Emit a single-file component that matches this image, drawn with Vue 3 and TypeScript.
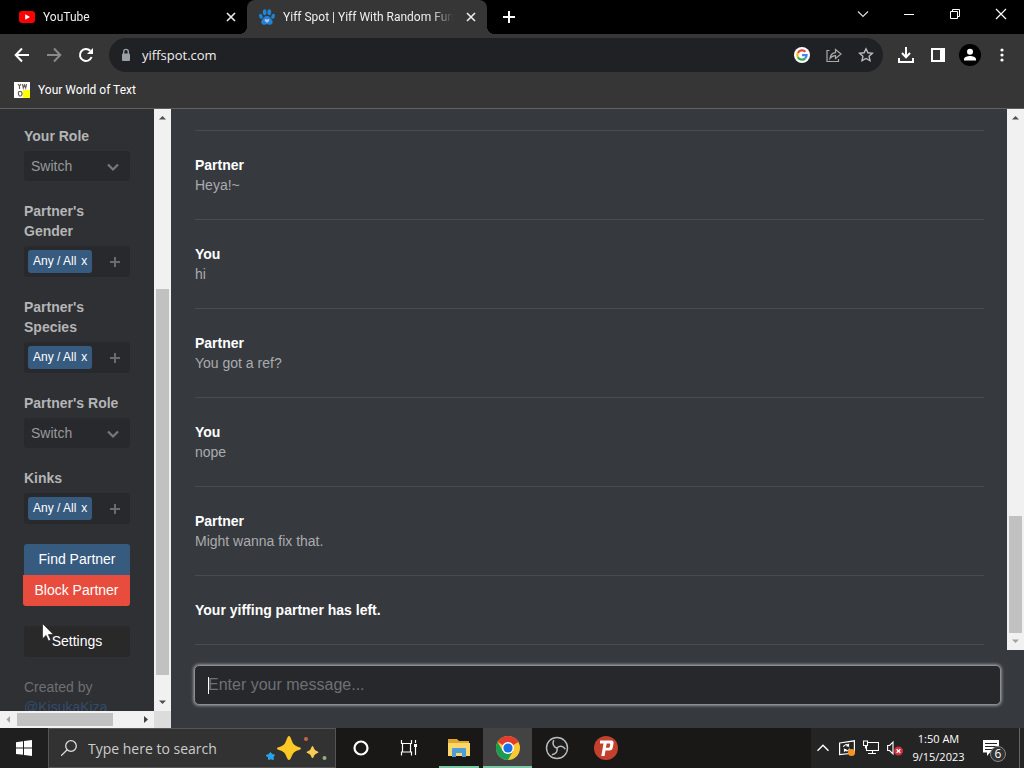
<script setup lang="ts">
import { ref } from 'vue'

interface Message {
  author: string
  text?: string
}

interface Field {
  id: string
  label: string
  kind: 'select' | 'tags'
}

const fields: Field[] = [
  { id: 'your-role', label: 'Your Role', kind: 'select' },
  { id: 'partner-gender', label: "Partner's Gender", kind: 'tags' },
  { id: 'partner-species', label: "Partner's Species", kind: 'tags' },
  { id: 'partner-role', label: "Partner's Role", kind: 'select' },
  { id: 'kinks', label: 'Kinks', kind: 'tags' },
]

const messages: Message[] = [
  { author: 'Partner', text: 'Heya!~' },
  { author: 'You', text: 'hi' },
  { author: 'Partner', text: 'You got a ref?' },
  { author: 'You', text: 'nope' },
  { author: 'Partner', text: 'Might wanna fix that.' },
  { author: 'Your yiffing partner has left.' },
]

const draft = ref('')
</script>

<template>
  <div class="desktop">
    <header class="tabstrip">
      <div class="tab">
        <svg class="ico16" viewBox="0 0 16 16"><rect x="0" y="2" width="16" height="12" rx="3" fill="#f00" /><path d="M6.2 5.2 11 8l-4.800 2.800z" fill="#fff" /></svg>
        <span class="tab-title">YouTube</span>
        <button class="tab-close" aria-label="Close tab"><svg class="ico16" viewBox="0 0 16 16"><path d="M4 4l8 8M12 4l-8 8" stroke="#eee" stroke-width="1.600" /></svg></button>
      </div>
      <div class="tab active">
        <svg class="ico16" viewBox="0 0 16 16">
          <g fill="#1d84d6">
            <ellipse cx="5.700" cy="3.300" rx="1.900" ry="3" /><ellipse cx="10.300" cy="3.300" rx="1.900" ry="3" />
            <ellipse cx="1.900" cy="7.300" rx="1.700" ry="2.500" transform="rotate(-20 1.900 7.300)" /><ellipse cx="14.100" cy="7.300" rx="1.700" ry="2.500" transform="rotate(20 14.100 7.300)" />
            <path d="M8 7c3 0 3.600 2.300 5 4 1.500 2 .4 4.800-2 4.800-1.200 0-1.800-.5-3-.5s-1.800.5-3 .5c-2.400 0-3.500-2.800-2-4.800C4.400 9.300 5 7 8 7z" />
          </g>
          <path d="M8 13.800c-1.600-1.100-2.600-1.900-2.300-3 .3-1 1.600-1.100 2.300-.1.700-1 2-.9 2.300.1.300 1.100-.7 1.900-2.300 3z" fill="#c9b8ff" />
        </svg>
        <span class="tab-title">Yiff Spot | Yiff With Random Furries</span>
        <button class="tab-close" aria-label="Close tab"><svg class="ico16" viewBox="0 0 16 16"><path d="M4 4l8 8M12 4l-8 8" stroke="#eee" stroke-width="1.600" /></svg></button>
      </div>
      <button class="new-tab" aria-label="New tab"><svg class="ico16" viewBox="0 0 16 16"><path d="M8 2v12M2 8h12" stroke="#fff" stroke-width="2" /></svg></button>
      <div class="window-controls">
        <button aria-label="Search tabs"><svg class="ico16" viewBox="0 0 16 16"><path d="M3 5.500 8 10.500l5-5" fill="none" stroke="#ddd" stroke-width="1.200" /></svg></button>
        <button aria-label="Minimize"><svg class="ico16" viewBox="0 0 16 16"><path d="M3 8.500h10" stroke="#fff" /></svg></button>
        <button aria-label="Restore"><svg class="ico16" viewBox="0 0 16 16"><path d="M3.500 5.500h7v7h-7zM5.500 5.500v-2h7v7h-2" fill="none" stroke="#fff" /></svg></button>
        <button aria-label="Close"><svg class="ico16" viewBox="0 0 16 16"><path d="M3 3l10 10M13 3 3 13" stroke="#fff" stroke-width="1.200" /></svg></button>
      </div>
    </header>

    <div class="toolbar">
      <button class="tool" aria-label="Back"><svg class="ico16" viewBox="0 0 16 16"><path d="M15 8H2M8 1.500 1.700 8 8 14.500" fill="none" stroke="#fff" stroke-width="2" /></svg></button>
      <button class="tool" aria-label="Forward"><svg class="ico16" viewBox="0 0 16 16"><path d="M1 8h13M8 1.500 14.300 8 8 14.500" fill="none" stroke="#8a8a8a" stroke-width="2" /></svg></button>
      <button class="tool" aria-label="Reload"><svg class="ico16" viewBox="0 0 16 16"><path d="M13.600 10A6 6 0 1 1 12.300 3.800" fill="none" stroke="#fff" stroke-width="2" /><path d="M15 1v6H9z" fill="#fff" /></svg></button>
      <div class="omnibox">
        <svg class="ico16" viewBox="0 0 16 16"><rect x="4" y="6.500" width="8" height="7.500" rx="1" fill="#9aa0a6" /><path d="M5.700 7V4.700a2.300 2.300 0 0 1 4.600 0V7" fill="none" stroke="#9aa0a6" stroke-width="1.400" /></svg>
        <input class="address" type="text" value="yiffspot.com" aria-label="Address bar" />
        <button class="tool" aria-label="Google Search">
          <svg class="ico16" viewBox="0 0 16 16"><circle cx="8" cy="8" r="8" fill="#fff" />
            <g fill="none" stroke-width="2.200"><path d="M3.900 5.900A4.700 4.700 0 0 1 11.400 4.800" stroke="#ea4335" /><path d="M3.900 10.300a4.700 4.700 0 0 1 0-4.600" stroke="#fbbc05" /><path d="M11.200 11.400a4.700 4.700 0 0 1-7.300-1.100" stroke="#34a853" /><path d="M8 8.200h4.600A4.700 4.700 0 0 1 11.200 11.400" stroke="#4285f4" /></g>
          </svg>
        </button>
        <button class="tool" aria-label="Share"><svg class="ico16" viewBox="0 0 16 16"><path d="M3.500 3.500H1v11h11.500V12M4 11.500C4.500 7.500 6.500 5.800 9.500 5.600V2.500L15 7l-5.500 4.500V8.600C7 8.600 5.500 9.500 4 11.500z" fill="none" stroke="#aaa" stroke-width="1.200" /></svg></button>
        <button class="tool" aria-label="Bookmark"><svg class="ico16" viewBox="0 0 16 16"><path d="M8 1.800l1.900 4 4.500.5-3.300 3 .9 4.400-4-2.200-4 2.200.9-4.400-3.300-3 4.500-.5z" fill="none" stroke="#bbb" stroke-width="1.400" /></svg></button>
      </div>
      <button class="tool" aria-label="Downloads"><svg class="ico16" viewBox="0 0 16 16"><path d="M8 0v10M4 6l4 4.200L12 6M1 11v4h14v-4" fill="none" stroke="#fff" stroke-width="2" /></svg></button>
      <button class="tool" aria-label="Side panel"><svg class="ico16" viewBox="0 0 16 16"><path fill-rule="evenodd" d="M1 1h14v14H1zM3 3v10h7V3z" fill="#fff" /></svg></button>
      <button class="tool" aria-label="Profile"><svg class="ico22" viewBox="0 0 22 22"><circle cx="11" cy="11" r="11" fill="#000" /><circle cx="11" cy="7.800" r="3" fill="#fff" /><path d="M5 16.500v-1.300c0-2 3.500-3.200 6-3.200s6 1.200 6 3.200v1.300z" fill="#fff" /></svg></button>
      <button class="tool" aria-label="Menu"><svg class="ico16" viewBox="0 0 16 16" fill="#fff"><circle cx="8" cy="3" r="1.600" /><circle cx="8" cy="8" r="1.600" /><circle cx="8" cy="13" r="1.600" /></svg></button>
    </div>

    <nav class="bookmarks">
      <a href="#" class="bookmark">
        <svg class="ico16" viewBox="0 0 16 16"><path d="M0 0h16v16H0z" fill="#fff" /><path d="M9 8h7v8H9z" fill="#ff0" /><path d="M4 2l1.500 2L7 2M5.500 4v3M8.500 2l.8 4 1.200-3 1.200 3 .8-4M5 9.500h2l1 1.500v1.500L7 14H5.500L4.500 12.500V10.500z" fill="none" stroke="#665e55" stroke-width="1.200" /></svg>
        <span>Your World of Text</span>
      </a>
    </nav>

    <div class="page">
      <aside class="sidebar">
        <div class="side-view">
          <form class="settings" @submit.prevent>
            <div v-for="f in fields" :key="f.id" class="field">
              <label :for="f.id">{{ f.label }}</label>
              <div v-if="f.kind === 'select'" class="select-wrap">
                <select :id="f.id"><option>Switch</option></select>
                <svg class="chevron" viewBox="0 0 12 12"><path d="M1 3.500l5 5 5-5" fill="none" stroke="#77797c" stroke-width="2.200" /></svg>
              </div>
              <div v-else class="tag-box">
                <button type="button" class="tag"><span>Any / All</span><span>x</span></button>
                <button :id="f.id" type="button" class="add" :aria-label="'Add to ' + f.label"><svg viewBox="0 0 12 12"><path d="M6 1v10M1 6h10" stroke="#696b6e" stroke-width="2" /></svg></button>
              </div>
            </div>
            <div class="actions">
              <button type="button" class="btn find">Find Partner</button>
              <button type="button" class="btn block">Block Partner</button>
            </div>
            <button type="button" class="btn prefs">Settings</button>
            <p class="credit">Created by <a href="#">@KisukaKiza</a></p>
          </form>
        </div>
        <div class="vbar side-v">
          <svg class="arrow" viewBox="0 0 17 17"><path d="M5 10.500h7L8.500 7z" fill="#505050" /></svg>
          <div class="track"><div class="thumb"></div></div>
          <svg class="arrow" viewBox="0 0 17 17"><path d="M5 6.500h7L8.500 10z" fill="#505050" /></svg>
        </div>
        <div class="hbar">
          <svg class="arrow" viewBox="0 0 17 17"><path d="M10 5v7L6.500 8.500z" fill="#a3a3a3" /></svg>
          <div class="track"><div class="thumb"></div></div>
          <svg class="arrow" viewBox="0 0 17 17"><path d="M7 5v7l4-3.500z" fill="#404040" /></svg>
        </div>
        <div class="corner"></div>
      </aside>

      <main class="chat">
        <div class="feed-row">
          <section class="feed">
            <article v-for="(m, i) in messages" :key="i" class="message">
              <strong>{{ m.author }}</strong>
              <p v-if="m.text">{{ m.text }}</p>
            </article>
          </section>
          <div class="vbar feed-v">
            <svg class="arrow" viewBox="0 0 17 17"><path d="M5 10.500h7L8.500 7z" fill="#505050" /></svg>
            <div class="track"><div class="thumb"></div></div>
            <svg class="arrow" viewBox="0 0 17 17"><path d="M5 6.500h7L8.500 10z" fill="#a3a3a3" /></svg>
          </div>
        </div>
        <div class="composer">
          <div class="entry">
            <input v-model="draft" type="text" placeholder="Enter your message..." aria-label="Message" />
            <span class="caret"></span>
          </div>
        </div>
      </main>
    </div>

    <footer class="taskbar">
      <button class="start" aria-label="Start"><svg class="ico16" viewBox="0 0 16 16"><path d="M0 2.200 7 1.300v6.300H0zM8 1.100l8-1.100v7.600H8zM0 8.500h7v6.300L0 13.900zM8 8.500h8V16l-8-1.100z" fill="#fff" /></svg></button>
      <label class="search">
        <svg class="ico16" viewBox="0 0 16 16"><circle cx="10" cy="6" r="5.300" fill="none" stroke="#ddd" stroke-width="1.300" /><path d="M6.200 9.800 0 15.800" stroke="#ddd" stroke-width="1.300" /></svg>
        <input type="text" placeholder="Type here to search" aria-label="Type here to search" />
        <svg class="sparkles" viewBox="0 0 62 26">
          <path d="M24 1c2 0 2.500 6 5 8.500S36 12 36 13.500 31.500 15 29 17.500 26 25 24 25s-2.500-5-5-7.500S12 15 12 13.500s4.500-1.500 7-4S22 1 24 1z" fill="#fbc926" />
          <path d="M47.500 11c1 0 1.300 2.800 2.500 4s3.500 1.500 3.500 2.200-2.300 1-3.500 2.200-1.500 3.600-2.500 3.600-1.300-2.400-2.500-3.600-3.500-1.500-3.500-2.200 2.300-1 3.500-2.200 1.500-4 2.500-4z" fill="#f7cc52" />
          <path d="M5.500 17.500 7 19.500l2.500.5-1.500 2 .3 2.500-2.500-.7-2.300.7v-2.500L1 20.500l2.800-1z" fill="#28a5ea" stroke="#28a5ea" stroke-width="1" />
          <circle cx="41" cy="4" r="2" fill="#c8683a" /><circle cx="59.500" cy="23" r="2" fill="#8fb27c" />
        </svg>
      </label>
      <div class="apps">
        <button aria-label="Cortana"><svg class="ico24" viewBox="0 0 24 24"><circle cx="12" cy="12" r="6.500" fill="none" stroke="#fff" stroke-width="2.200" /></svg></button>
        <button aria-label="Task View"><svg class="ico24" viewBox="0 0 24 24"><path d="M3.500 4v3.500h10V4M3.500 19.500V16h10v3.500M4.500 7.500V16M12.500 7.500V16M17.500 4v3M17.500 11v8" fill="none" stroke="#fff" stroke-width="1.200" /><path d="M16 8h3v3h-3z" fill="#fff" /></svg></button>
        <button class="open" aria-label="File Explorer"><svg class="ico24" viewBox="0 0 24 24"><path d="M1 3h9l2 2h10v4H1z" fill="#e0a52b" /><path d="M1 7h22v13H1z" fill="#fbd66b" /><path d="M5 21v-8q0-1 1-1h12q1 0 1 1v8h-4v-4H9v4z" fill="#4b9cd8" /></svg></button>
        <button class="open current" aria-label="Google Chrome"><svg class="ico24" viewBox="0 0 24 24"><circle cx="12" cy="12" r="12" fill="#fcc934" /><path d="M1.600 6A12 12 0 0 1 22.400 6L12 12z" fill="#e33b2e" /><path d="M12 6h10.400L12 7z" fill="#e33b2e" /><path d="M1.600 6A12 12 0 0 0 12 24l5.200-9L12 12 6.800 15z" fill="#1e9b52" /><circle cx="12" cy="12" r="6" fill="#fff" /><circle cx="12" cy="12" r="4.600" fill="#1a6fe8" /></svg></button>
        <button aria-label="OBS Studio">
          <svg class="ico24" viewBox="0 0 24 24"><circle cx="12" cy="12" r="10.500" fill="#1d1d1d" stroke="#bbb" stroke-width="1.400" />
            <g fill="none" stroke="#bbb" stroke-width="1.500"><path d="M8.800 4.200C6.900 8 8.800 11.200 12 12" /><path d="M8.800 4.200C6.900 8 8.800 11.200 12 12" transform="rotate(120 12 12)" /><path d="M8.800 4.200C6.900 8 8.800 11.200 12 12" transform="rotate(240 12 12)" /></g>
          </svg>
        </button>
        <button aria-label="Psiphon"><svg class="ico24" viewBox="0 0 24 24"><circle cx="12" cy="12" r="12" fill="#c3402d" /><path fill-rule="evenodd" d="M6 4.500h11q3 0 2.500 3l-.7 4q-.5 3-3.500 3h-3.800L10.600 20H7.300L9.500 7.500H6zM12.700 7.500l-.8 4.200h2.600q1.100 0 1.300-1l.4-2.200q.1-1-.9-1z" fill="#fff" /></svg></button>
      </div>
      <div class="tray">
        <button aria-label="Show hidden icons"><svg class="ico16" viewBox="0 0 16 16"><path d="M2.500 10.800 8 5.200l5.500 5.600" fill="none" stroke="#fff" stroke-width="1.400" /></svg></button>
        <button aria-label="Update"><svg class="ico16" viewBox="0 0 16 16"><path d="M.6 3 15.400.8V13L.6 14.500z" fill="none" stroke="#fff" stroke-width="1.200" /><path d="M4.500 7c.5-2.500 3.500-3 5-1.200V3.800M9.800 5.800H7.500M10.500 8.500c-.5 2.500-3.500 3-5 1.200v2M5.200 9.700h2.300" fill="none" stroke="#fff" stroke-width="1.200" /><circle cx="12.500" cy="12.500" r="3.500" fill="#f7931e" /></svg></button>
        <button aria-label="Network"><svg class="ico16" viewBox="0 0 16 16"><path d="M5 2.500h10.500v8H3.500V6M9.500 10.500v3M5 13.500h8M.5 1h4v4.500h-4zM2.500 5.500v3" fill="none" stroke="#fff" stroke-width="1.100" /></svg></button>
        <button aria-label="Volume muted"><svg class="ico16" viewBox="0 0 16 16"><path d="M.6 5.500h2L6 2v12l-3.400-3.500h-2z" fill="none" stroke="#fff" stroke-width="1.100" /><circle cx="11.500" cy="11" r="4.500" fill="#d12f3c" /><path d="M9.700 9.200l3.600 3.600M13.300 9.200l-3.600 3.600" stroke="#fff" stroke-width="1.300" /></svg></button>
        <button class="clock"><span>1:50 AM</span><span>9/15/2023</span></button>
        <button class="notify" aria-label="6 notifications"><svg class="ico20" viewBox="0 0 20 20"><path d="M2 2h16v12.500H9L6 18v-3.500H2z" fill="#fff" /><path d="M4 5.500h12M4 8.500h12M4 11.500h8" stroke="#222" /></svg><span class="badge">6</span></button>
        <span class="peek"></span>
      </div>
    </footer>

    <svg class="pointer" viewBox="0 0 12 19"><path d="M.5.5v15.300l3.600-3.400 2.400 5.600 2.300-1-2.400-5.400h5z" fill="#fff" stroke="#222" stroke-width=".7" /></svg>
  </div>
</template>

<style>
html, body, #app {
  height: 100%;
}
body {
  margin: 0;
  overflow: hidden;
  background: #36393e;
}
</style>

<style scoped>
* {
  box-sizing: border-box;
}
button, input, select {
  font: inherit;
  color: inherit;
  border: 0;
  padding: 0;
  margin: 0;
  background: none;
  outline: none;
  min-width: 0;
}
svg {
  display: block;
  flex: none;
}
.ico16 { width: 16px; height: 16px; }
.ico20 { width: 20px; height: 20px; }
.ico22 { width: 22px; height: 22px; }
.ico24 { width: 24px; height: 24px; }

.desktop {
  position: relative;
  display: flex;
  flex-direction: column;
  height: 100%;
  font-family: "Open Sans", "Noto Sans", sans-serif;
  font-size: 12px;
  color: #fff;
}

/* Browser chrome */
.tabstrip {
  display: flex;
  height: 34px;
  flex: none;
  padding-left: 7px;
  background: #000;
}
.tabstrip, .bookmarks {
  font-family: Roboto, "Open Sans", sans-serif;
}
.tab {
  position: relative;
  display: flex;
  align-items: center;
  gap: 8px;
  flex: 0 1 240px;
  min-width: 0;
  padding: 0 8px 0 12px;
  color: #eee;
}
.tab.active {
  background: #363636;
  border-radius: 8px 8px 0 0;
}
.tab.active::before,
.tab.active::after {
  content: "";
  position: absolute;
  bottom: 0;
  width: 8px;
  height: 8px;
}
.tab.active::before {
  right: 100%;
  background: radial-gradient(circle at 0 0, #000 8px, #363636 8px);
}
.tab.active::after {
  left: 100%;
  background: radial-gradient(circle at 100% 0, #000 8px, #363636 8px);
}
.tab-title {
  flex: 1;
  overflow: hidden;
  white-space: nowrap;
  margin-right: -2px;
  mask-image: linear-gradient(to right, #000 85%, transparent 98%);
}
.tab-close {
  display: flex;
}
.new-tab {
  display: flex;
  align-items: center;
  justify-content: center;
  width: 44px;
}
.window-controls {
  display: flex;
  height: 28px;
  margin-left: auto;
}
.window-controls button {
  display: flex;
  align-items: center;
  justify-content: center;
  width: 46px;
}
.toolbar {
  display: flex;
  align-items: center;
  flex: none;
  height: 42px;
  padding: 0 6px;
  background: #363636;
}
.tool {
  display: flex;
  align-items: center;
  justify-content: center;
  flex: none;
  width: 32px;
  height: 32px;
}
.omnibox {
  display: flex;
  align-items: center;
  flex: 1;
  min-width: 0;
  height: 34px;
  margin: 0 7px;
  padding: 0 1px 0 9px;
  border-radius: 17px;
  background: #202124;
}
.address {
  flex: 1;
  padding-left: 8px;
  font-size: 13px;
  color: #eee;
}
.bookmarks {
  display: flex;
  align-items: center;
  flex: none;
  height: 33px;
  padding: 0 14px 4px;
  background: #363636;
  border-bottom: 1px solid #606060;
}
.bookmark {
  display: flex;
  align-items: center;
  gap: 8px;
  color: #fff;
  text-decoration: none;
}

/* Page */
.page {
  display: flex;
  flex: 1;
  min-height: 0;
  font-family: "Liberation Sans", Arial, sans-serif;
  font-size: 14px;
  line-height: 20px;
  background: #36393e;
}
.sidebar {
  display: grid;
  grid-template: minmax(0, 1fr) 17px / minmax(0, 1fr) 17px;
  flex: none;
  width: 171px;
}
.side-view {
  overflow: hidden;
  background: #2f3033;
}
.settings {
  display: flex;
  flex-direction: column;
  gap: 20px;
  padding: 17px 24px;
}
.field {
  display: flex;
  flex-direction: column;
  gap: 5px;
}
.field label {
  font-weight: bold;
  color: #b4b5b6;
}
.select-wrap {
  position: relative;
}
.select-wrap select {
  display: block;
  appearance: none;
  width: 100%;
  height: 30px;
  padding: 0 7px;
  color: #97999b;
  background: #28292c;
  border-radius: 3px;
}
.chevron {
  position: absolute;
  top: 10px;
  right: 11px;
  width: 12px;
  height: 12px;
  pointer-events: none;
}
.tag-box {
  display: flex;
  align-items: center;
  justify-content: space-between;
  height: 31px;
  padding: 0 9px 0 4px;
  background: #28292c;
  border-radius: 3px;
}
.tag {
  display: flex;
  gap: 5px;
  padding: 1px 5px 2px;
  font-size: 12px;
  color: #fff;
  background: #375a7f;
  border-radius: 3px;
}
.add svg {
  width: 12px;
  height: 12px;
}
.actions {
  display: flex;
  flex-direction: column;
}
.btn {
  height: 31px;
  padding-bottom: 2px;
  color: #fff;
  text-align: center;
}
.find {
  background: #375a7f;
  border-radius: 3px 3px 0 0;
}
.block {
  margin-left: -1px;
  background: #e74c3c;
  border-radius: 0 0 3px 3px;
}
.prefs {
  background: #29292a;
  border-radius: 3px;
}
.credit {
  margin: 0;
  color: #6d6f72;
}
.credit a {
  color: #2f4c6e;
  text-decoration: none;
}

/* Scrollbars */
.vbar, .hbar {
  display: flex;
  background: #f1f1f1;
}
.vbar {
  flex-direction: column;
  width: 17px;
}
.arrow {
  width: 17px;
  height: 17px;
}
.track {
  flex: 1;
  display: flex;
}
.vbar .track {
  flex-direction: column;
  padding: 0 2px;
}
.hbar .track {
  padding: 2px 0;
}
.thumb {
  background: #c1c1c1;
}
.side-v .thumb {
  height: 68%;
  margin-top: 163px;
}
.hbar .thumb {
  width: 80%;
}
.feed-v .track {
  justify-content: flex-end;
}
.feed-v .thumb {
  height: 23%;
}
.corner {
  background: #dcdcdc;
}

/* Chat */
.chat {
  display: flex;
  flex-direction: column;
  flex: 1;
  min-width: 0;
}
.feed-row {
  display: flex;
  flex: 1;
  min-height: 0;
}
.feed {
  flex: 1;
  min-width: 0;
  padding: 21px 23px 0 24px;
  overflow: hidden;
}
.message {
  padding: 24px 0;
  border-top: 1px solid #484b50;
}
.message:last-child {
  border-bottom: 1px solid #484b50;
}
.message strong {
  display: block;
  color: #fff;
}
.message p {
  margin: 0;
  color: #aaacae;
}
.composer {
  padding: 15px 23px 23px;
}
.entry {
  position: relative;
}
.entry input {
  display: block;
  width: 100%;
  height: 40px;
  padding: 0 13px;
  font-size: 16px;
  color: #ddd;
  background: #26282c;
  border: 1px solid #8b8e92;
  border-radius: 5px;
  box-shadow: 0 0 3px 1px #8b8e92;
}
.entry input::placeholder {
  color: #6d7174;
}
.caret {
  position: absolute;
  top: 12px;
  left: 14px;
  width: 1px;
  height: 17px;
  background: #fff;
}

/* Taskbar */
.taskbar {
  display: flex;
  flex: none;
  height: 40px;
  background: #1a1816;
}
.taskbar button {
  display: flex;
  align-items: center;
  justify-content: center;
}
.start {
  width: 48px;
  background: #1f1f1f;
}
.search {
  display: flex;
  align-items: center;
  flex: 0 1 288px;
  min-width: 0;
  padding: 0 8px 0 12px;
  background: #323232;
  border: 1px solid #555;
}
.search input {
  flex: 1;
  padding-left: 11px;
  font-size: 14px;
}
.search input::placeholder {
  color: #ccc;
  opacity: 1;
}
.sparkles {
  width: 62px;
  height: 26px;
}
.apps {
  display: flex;
}
.apps button {
  position: relative;
  width: 49px;
}
.apps .open::after {
  content: "";
  position: absolute;
  bottom: 0;
  left: 5px;
  right: 4px;
  height: 2px;
  background: #7cc7a3;
}
.apps .current {
  background: #434343;
}
.apps .current::after {
  left: 0;
  right: 0;
}
.tray {
  display: flex;
  margin-left: auto;
  padding-right: 4px;
  background: #242424;
}
.tray button {
  width: 24px;
}
.tray .clock {
  flex-direction: column;
  width: 63px;
  font-size: 11px;
  line-height: 18px;
}
.tray .notify {
  position: relative;
  justify-content: flex-start;
  width: 49px;
  padding-left: 11px;
}
.badge {
  position: absolute;
  top: 18px;
  left: 20px;
  width: 16px;
  height: 16px;
  line-height: 14px;
  text-align: center;
  border: 1px solid #888;
  border-radius: 50%;
  background: #333;
}
.peek {
  border-left: 1px solid #666;
}
.pointer {
  position: absolute;
  top: 623px;
  left: 42px;
  width: 12px;
  height: 19px;
}
</style>
